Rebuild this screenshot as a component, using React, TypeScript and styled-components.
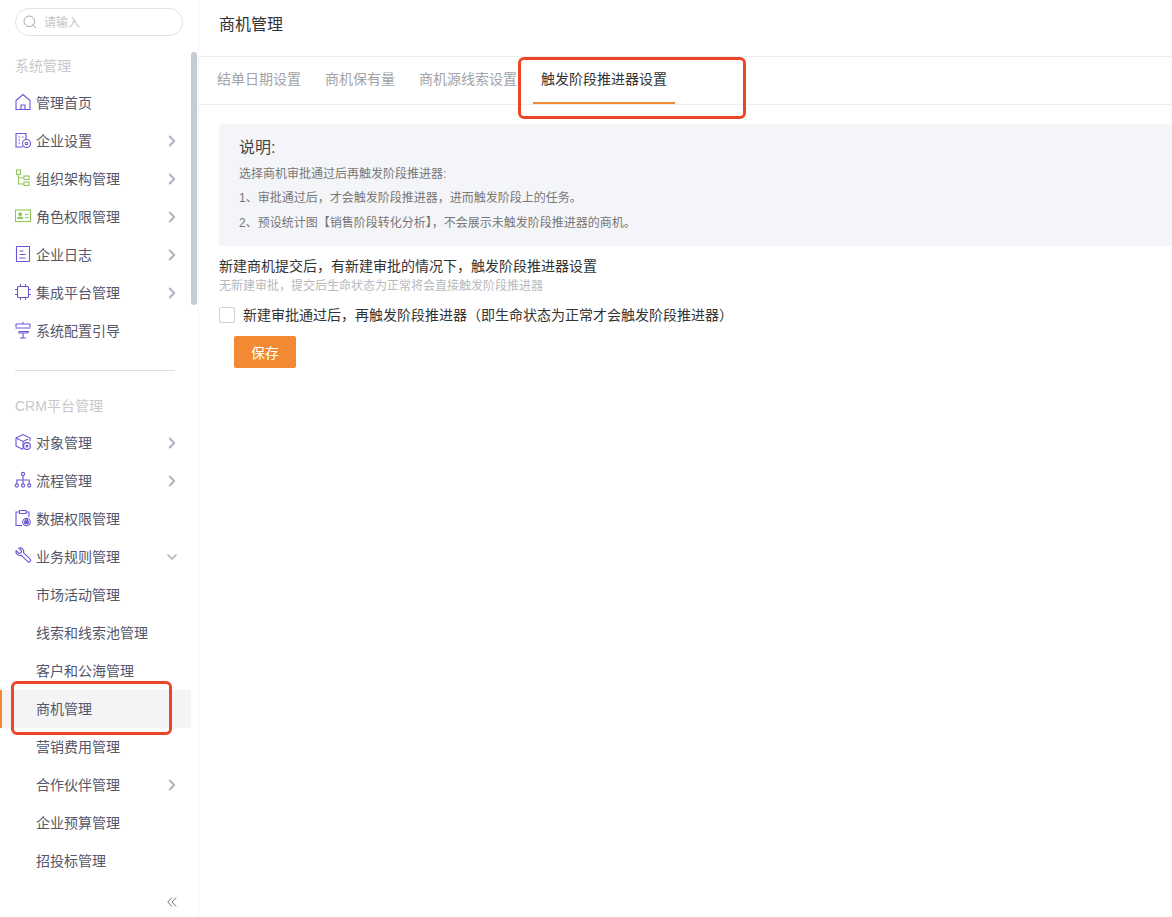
import React from "react";
import styled, { createGlobalStyle } from "styled-components";
import { ChevronRight, ChevronDown } from "lucide-react";

const Global = createGlobalStyle`
  html, body { margin: 0; padding: 0; background: #fff; height: 100%; overflow: hidden; }
  body { font-family: "Liberation Sans", "Noto Sans CJK SC", sans-serif; }
  * { box-sizing: border-box; }
`;

const Page = styled.div`
  display: flex;
  width: 1172px;
  height: 917px;
  overflow: hidden;
  position: relative;
`;

const Sidebar = styled.aside`
  width: 199px;
  flex: none;
  height: 917px;
  border-right: 1px solid #f5f5f7;
  position: relative;
  padding-top: 8px;
`;

const SearchBox = styled.div`
  margin-left: 15px;
  width: 168px;
  height: 28px;
  border: 1px solid #e1e1e8;
  border-radius: 14px;
  display: flex;
  align-items: center;
  padding-left: 7px;
  gap: 7px;
  color: #c4c4c8;
  font-size: 12px;
`;

const SearchText = styled.span`
  margin-bottom: 1px;
`;

const GroupLabel = styled.div<{ $top: number }>`
  margin-top: ${(p) => p.$top}px;
  padding-left: 15px;
  height: 20px;
  line-height: 20px;
  font-size: 14px;
  color: #c8c8cc;
`;

const Menu = styled.nav`
  margin-top: 8px;
  width: 191px;
`;

const Row = styled.div<{ $active?: boolean }>`
  height: 38px;
  display: flex;
  align-items: center;
  position: relative;
  padding: 0 0 2px 36px;
  font-size: 14px;
  color: #54566a;
  background: ${(p) => (p.$active ? "#f4f4f6" : "transparent")};
  ${(p) => (p.$active ? "border-left: 2px solid #f18a33; padding-left: 34px;" : "")}
`;

const IconSlot = styled.span`
  position: absolute;
  left: 14px;
  top: 9px;
  width: 18px;
  height: 18px;
  display: block;
`;

const Arrow = styled.span`
  position: absolute;
  left: 162px;
  top: 9px;
  width: 20px;
  height: 20px;
  color: #b0b2bf;
  display: flex;
  align-items: center;
  justify-content: center;
`;

const Divider = styled.div`
  margin: 20px 0 0 15px;
  width: 160px;
  height: 1px;
  background: #dcdcdf;
`;

const Thumb = styled.div`
  position: absolute;
  left: 191px;
  top: 52px;
  width: 6px;
  height: 253px;
  border-radius: 3px;
  background: #c5ccd5;
`;

const Collapse = styled.div`
  position: absolute;
  left: 167px;
  top: 897px;
  display: flex;
`;

const Main = styled.main`
  flex: 1;
  min-width: 0;
`;

const Title = styled.header`
  height: 57px;
  border-bottom: 1px solid #eeeef0;
  padding-left: 20px;
  font-size: 16px;
  line-height: 50px;
  color: #333;
`;

const Tabs = styled.div`
  height: 48px;
  border-bottom: 1px solid #eeeef0;
  display: flex;
  padding-left: 18px;
`;

const Tab = styled.div<{ $active?: boolean; $gap: number }>`
  font-size: 14px;
  line-height: 44px;
  height: 47px;
  margin-right: ${(p) => p.$gap}px;
  color: ${(p) => (p.$active ? "#333" : "#a3a3a6")};
  position: relative;
  ${(p) =>
    p.$active
      ? `&::after { content: ""; position: absolute; left: -8px; right: -8px; bottom: 0; height: 2px; background: #f18a33; }`
      : ""}
`;

const Body = styled.div`
  padding: 19px 0 0 20px;
`;

const Note = styled.section`
  height: 122px;
  width: 960px;
  background: #f4f5f9;
  border-radius: 4px;
  padding: 12px 20px 0;
`;

const NoteTitle = styled.div`
  font-size: 16px;
  line-height: 24px;
  margin-bottom: 1px;
  color: #444;
`;

const NoteLine = styled.div<{ $h: number }>`
  font-size: 12px;
  height: ${(p) => p.$h}px;
  line-height: ${(p) => p.$h}px;
  color: #777;
`;

const Heading = styled.div`
  margin-top: 10px;
  font-size: 14px;
  line-height: 20px;
  color: #333;
`;

const Sub = styled.div`
  margin-top: 1px;
  font-size: 12px;
  line-height: 18px;
  color: #b9b9bc;
`;

const CheckRow = styled.label`
  margin-top: 10px;
  display: flex;
  align-items: center;
  gap: 8px;
  height: 20px;
  font-size: 14px;
  color: #333;
`;

const CheckText = styled.span`
  margin-bottom: 2px;
`;

const CheckBox = styled.span`
  width: 16px;
  height: 16px;
  border: 1px solid #cfcfd6;
  border-radius: 2px;
  background: #fff;
`;

const Save = styled.button`
  display: block;
  margin: 11px 0 0 15px;
  width: 62px;
  height: 32px;
  border: 0;
  border-radius: 2px;
  background: #f18a33;
  color: #fff;
  font: inherit;
  font-size: 14px;
  padding: 0;
`;

const Mark = styled.div<{ $l: number; $t: number; $w: number; $h: number }>`
  position: absolute;
  left: ${(p) => p.$l}px;
  top: ${(p) => p.$t}px;
  width: ${(p) => p.$w}px;
  height: ${(p) => p.$h}px;
  border: 3px solid #ee4528;
  border-radius: 6px;
  pointer-events: none;
`;

const P = "#6a55d8";
const G = "#93c65f";

const Svg = ({ children, color = P }: { children: React.ReactNode; color?: string }) => (
  <svg width="18" height="18" viewBox="0 0 18 18" fill="none" strokeWidth="1.1" stroke={color}>
    {children}
  </svg>
);

const SearchIcon = () => (
  <svg width="14" height="14" viewBox="0 0 14 14" fill="none" stroke="#a8a8ae" strokeWidth="1">
    <circle cx="6.3" cy="6.3" r="5.3" />
    <path d="M10.2 10.2 13 13" />
  </svg>
);

const DoubleLeft = () => (
  <svg width="10" height="10" viewBox="0 0 10 10" fill="none" stroke="#6f7180" strokeWidth="1">
    <path d="M5 .5.8 5 5 9.5M9.2.5 5 5l4.2 4.5" />
  </svg>
);

const icons: Record<string, React.ReactNode> = {
  home: (
    <Svg>
      <path d="M2 7.5 9 1.5l7 6V16.5H2zM7 16.5v-4.5h4v4.5" />
    </Svg>
  ),
  company: (
    <Svg>
      <path d="M9 16H2V2.5h10V8" />
      <path d="M4.5 6h1.5M8 6h1.5M4.5 9h1.5M4.5 12h1.5" />
      <circle cx="12.5" cy="12.5" r="4" />
      <circle cx="12.5" cy="12.5" r="1.3" />
    </Svg>
  ),
  org: (
    <Svg color={G}>
      <rect x="2.5" y="1" width="4" height="4.5" />
      <rect x="10" y="7" width="5" height="3.5" />
      <rect x="10" y="13" width="5" height="3.5" />
      <path d="M4.5 5.5V15H10M4.5 8.8H10" />
    </Svg>
  ),
  role: (
    <Svg color={G}>
      <rect x="1.5" y="3" width="15" height="11.5" />
      <circle cx="6.2" cy="7.2" r="1.4" fill={G} />
      <path d="M3.6 11.5c.3-2 5-2 5.2 0z" fill={G} />
      <path d="M11 7.5h3.5M11 10.5h3.5" />
    </Svg>
  ),
  log: (
    <Svg>
      <rect x="2.5" y="1.5" width="13" height="15" rx="0.5" />
      <path d="M5.5 6h4M5.5 9.5h6M5.5 13h6" />
    </Svg>
  ),
  chip: (
    <Svg>
      <rect x="3.5" y="3.5" width="11" height="11" rx="1" />
      <path d="M6.5 1v2.5M11.5 1v2.5M6.5 14.5V17M11.5 14.5V17M1 6.5h2.5M1 11.5h2.5M14.5 6.5H17M14.5 11.5H17" />
    </Svg>
  ),
  guide: (
    <Svg>
      <path d="M2 3h14M2 3v3M16 3v3M1.5 7h15M5 10.5h9.5l-1 1.5H5zM9 12v5M6 17h6M9 1v2" />
    </Svg>
  ),
  object: (
    <Svg>
      <path d="M9 16.5 2 13V5l7-3.5L16 5v3M2 5l7 3.5L14 6M9 8.5V16" />
      <circle cx="13" cy="13" r="3.4" />
      <circle cx="13" cy="13" r="1" />
    </Svg>
  ),
  flow: (
    <Svg>
      <circle cx="9" cy="3" r="1.6" />
      <circle cx="2.8" cy="14.5" r="1.6" />
      <circle cx="9" cy="14.5" r="1.6" />
      <circle cx="15.2" cy="14.5" r="1.6" />
      <path d="M9 4.6V13M2.8 13V9h12.4v4" />
    </Svg>
  ),
  data: (
    <Svg>
      <path d="M5.5 3H2v13.5h6M12 3h3v5M5.5 1.5h6.5V4.5H5.5z" />
      <circle cx="12.5" cy="13" r="3.8" />
      <rect x="10.8" y="12" width="3.4" height="2.8" fill={P} />
      <path d="M11.5 12v-1a1 1 0 0 1 2 0v1" />
    </Svg>
  ),
  wrench: (
    <Svg>
      <path d="M2.2 3.6 5 6.4l2-.6.6-2L4.8 1.2C7.6.2 10.4 2.4 9.6 5.8l6.6 6.4c1.3 1.6-.7 3.8-2.4 2.5L7.2 8.2C4.4 9.2 1 6.4 2.2 3.6z" />
    </Svg>
  ),
};

type Item = { label: string; icon?: string; arrow?: "right" | "down"; active?: boolean };

const topItems: Item[] = [
  { label: "管理首页", icon: "home" },
  { label: "企业设置", icon: "company", arrow: "right" },
  { label: "组织架构管理", icon: "org", arrow: "right" },
  { label: "角色权限管理", icon: "role", arrow: "right" },
  { label: "企业日志", icon: "log", arrow: "right" },
  { label: "集成平台管理", icon: "chip", arrow: "right" },
  { label: "系统配置引导", icon: "guide" },
];

const crmItems: Item[] = [
  { label: "对象管理", icon: "object", arrow: "right" },
  { label: "流程管理", icon: "flow", arrow: "right" },
  { label: "数据权限管理", icon: "data" },
  { label: "业务规则管理", icon: "wrench", arrow: "down" },
  { label: "市场活动管理" },
  { label: "线索和线索池管理" },
  { label: "客户和公海管理" },
  { label: "商机管理", active: true },
  { label: "营销费用管理" },
  { label: "合作伙伴管理", arrow: "right" },
  { label: "企业预算管理" },
  { label: "招投标管理" },
];

const MenuRow = ({ item }: { item: Item }) => (
  <Row $active={item.active}>
    {item.icon && <IconSlot>{icons[item.icon]}</IconSlot>}
    {item.label}
    {item.arrow && (
      <Arrow>
        {item.arrow === "right" ? <ChevronRight size={18} strokeWidth={2.6} /> : <ChevronDown size={16} strokeWidth={2.6} />}
      </Arrow>
    )}
  </Row>
);

const COMMA = "\uFF0C";
const LP = "\uFF08";
const RP = "\uFF09";

export default function App() {
  return (
    <Page>
      <Global />
      <Sidebar>
        <SearchBox>
          <SearchIcon />
          <SearchText>请输入</SearchText>
        </SearchBox>
        <GroupLabel $top={20}>系统管理</GroupLabel>
        <Menu>
          {topItems.map((i) => (
            <MenuRow key={i.label} item={i} />
          ))}
        </Menu>
        <Divider />
        <GroupLabel $top={25}>CRM平台管理</GroupLabel>
        <Menu>
          {crmItems.map((i) => (
            <MenuRow key={i.label} item={i} />
          ))}
        </Menu>
        <Thumb />
        <Collapse>
          <DoubleLeft />
        </Collapse>
      </Sidebar>
      <Main>
        <Title>商机管理</Title>
        <Tabs>
          <Tab $gap={24}>结单日期设置</Tab>
          <Tab $gap={24}>商机保有量</Tab>
          <Tab $gap={24}>商机源线索设置</Tab>
          <Tab $gap={0} $active>
            触发阶段推进器设置
          </Tab>
        </Tabs>
        <Body>
          <Note>
            <NoteTitle>说明:</NoteTitle>
            <NoteLine $h={26}>选择商机审批通过后再触发阶段推进器:</NoteLine>
            <NoteLine $h={22}>{`1、审批通过后${COMMA}才会触发阶段推进器${COMMA}进而触发阶段上的任务。`}</NoteLine>
            <NoteLine $h={28}>{`2、预设统计图【销售阶段转化分析】${COMMA}不会展示未触发阶段推进器的商机。`}</NoteLine>
          </Note>
          <Heading>{`新建商机提交后${COMMA}有新建审批的情况下${COMMA}触发阶段推进器设置`}</Heading>
          <Sub>{`无新建审批${COMMA}提交后生命状态为正常将会直接触发阶段推进器`}</Sub>
          <CheckRow>
            <CheckBox />
            <CheckText>{`新建审批通过后${COMMA}再触发阶段推进器${LP}即生命状态为正常才会触发阶段推进器${RP}`}</CheckText>
          </CheckRow>
          <Save>保存</Save>
        </Body>
      </Main>
      <Mark $l={518} $t={57} $w={228} $h={62} />
      <Mark $l={11} $t={681} $w={161} $h={54} />
    </Page>
  );
}
